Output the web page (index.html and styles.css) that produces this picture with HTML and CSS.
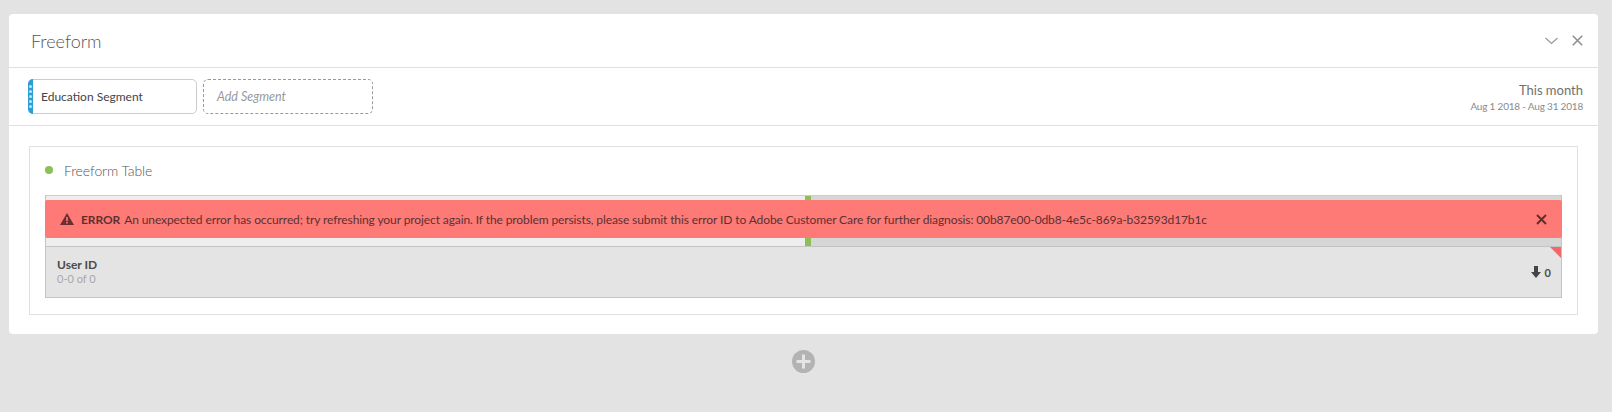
FILE: index.html
```html
<!DOCTYPE html>
<html lang="en">
<head>
    <meta charset="UTF-8">
    <title>Freeform</title>
    <link rel="stylesheet" href="styles.css">
</head>
<body>
    <div class="panel">
        <div class="panel-head">
            <h1>Freeform</h1>
            <div class="panel-actions">
                <svg width="13" height="8" viewBox="0 0 13 8"><path d="M.5 1l6 5.5 6-5.5" fill="none" stroke="#999" stroke-width="1.2"/></svg>
                <svg width="11" height="11" viewBox="0 0 11 11"><path d="M.8.8l9.4 9.4M10.2.8L.8 10.2" fill="none" stroke="#8f8f8f" stroke-width="1.6"/></svg>
            </div>
        </div>

        <div class="segments">
            <div class="segment">
                <span class="grip"><i></i><i></i><i></i><i></i><i></i></span>
                <span>Education Segment</span>
            </div>
            <div class="add-segment">Add Segment</div>
            <div class="date-range">
                <div class="date-name">This month</div>
                <div class="date-span">Aug 1 2018 - Aug 31 2018</div>
            </div>
        </div>

        <div class="panel-body">
            <div class="viz">
                <div class="viz-title"><span class="dot"></span>Freeform Table</div>
                <div class="table">
                    <div class="table-bar">
                        <div class="bar-left"></div>
                        <div class="bar-mark"></div>
                        <div class="bar-right"></div>
                    </div>
                    <div class="error-banner">
                        <svg class="warn" width="14" height="12" viewBox="0 0 14 12"><path d="M7 0l7 12H0z M6.2 4v4.2h1.6V4z M6.2 9v1.6h1.6V9z" fill="#6b2f2f" fill-rule="evenodd"/></svg>
                        <b>ERROR</b>
                        <span>An unexpected error has occurred; try refreshing your project again. If the problem persists, please submit this error ID to Adobe Customer Care for further diagnosis: 00b87e00-0db8-4e5c-869a-b32593d17b1c</span>
                        <svg class="banner-close" width="11" height="11" viewBox="0 0 11 11"><path d="M1 1l9 9M10 1l-9 9" fill="none" stroke="#5e3030" stroke-width="2"/></svg>
                    </div>
                    <div class="table-row">
                        <div>
                            <div class="row-name">User ID</div>
                            <div class="row-count">0-0 of 0</div>
                        </div>
                        <div class="row-sort">
                            <svg width="10" height="12" viewBox="0 0 10 12"><path d="M3 0h4v6h3l-5 6-5-6h3z" fill="#444"/></svg>
                            <span>0</span>
                        </div>
                        <span class="corner"></span>
                    </div>
                </div>
            </div>
        </div>
    </div>

    <div class="add-panel">
        <svg width="23" height="23" viewBox="0 0 23 23"><circle cx="11.5" cy="11.5" r="11.5" fill="#b3b3b3"/><path d="M11.5 4.5v14M4.5 11.5h14" stroke="#e4e4e4" stroke-width="3"/></svg>
    </div>
</body>
</html>
```

FILE: styles.css
```css
body {
    margin: 0;
    padding: 14px 14px 0 9px;
    background-color: #e3e3e3;
    font-family: Lato, Arial, sans-serif;
    color: #4b4b4b;
}
.panel {
    background-color: #fff;
    border-radius: 4px;
    height: 320px;
}
.panel-head {
    display: flex;
    justify-content: space-between;
    align-items: center;
    height: 53px;
    padding: 0 15px 0 22px;
    border-bottom: 1px solid #e0e0e0;
}
h1 {
    margin: 0;
    font-size: 18px;
    font-weight: 300;
    color: #555;
}
.panel-actions {
    display: flex;
    align-items: center;
    gap: 14px;
}
.segments {
    display: flex;
    align-items: center;
    gap: 6px;
    height: 57px;
    padding: 0 15px 0 19px;
    border-bottom: 1px solid #e0e0e0;
}
.segment,
.add-segment {
    display: flex;
    align-items: center;
    box-sizing: border-box;
    height: 35px;
    font-size: 12px;
    border-radius: 5px;
}
.segment {
    width: 169px;
    border: 1px solid #ccc;
    color: #444;
}
.grip {
    display: flex;
    flex-direction: column;
    justify-content: center;
    align-items: center;
    gap: 2px;
    width: 5px;
    height: 35px;
    margin: 0 8px 0 -1px;
    background-color: #2b9fd3;
    border-radius: 5px 0 0 5px;
}
.grip i {
    width: 3px;
    height: 3px;
    border-radius: 50%;
    background-color: #bfe4f4;
}
.add-segment {
    width: 170px;
    padding-left: 13px;
    border: 1px dashed #999;
    color: #999;
    font-size: 12.5px;
    font-style: italic;
}
.date-range {
    margin-left: auto;
    text-align: right;
}
.date-name {
    font-size: 13px;
    color: #707070;
}
.date-span {
    margin-top: 2px;
    font-size: 10px;
    letter-spacing: -0.2px;
    color: #8a8a8a;
}
.panel-body {
    padding: 20px 20px 0;
}
.viz {
    height: 167px;
    padding: 0 15px;
    border: 1px solid #e0e0e0;
}
.viz-title {
    display: flex;
    align-items: center;
    height: 46px;
    padding-bottom: 2px;
    font-size: 14px;
    font-weight: 300;
    letter-spacing: -0.1px;
    color: #555;
}
.dot {
    width: 8px;
    height: 8px;
    margin-right: 11px;
    border-radius: 50%;
    background-color: #8ac054;
}
.table {
    position: relative;
    border: 1px solid #c4c4c4;
    border-top: 0;
}
.table-bar {
    display: flex;
    height: 51px;
    border-top: 1px solid #ccc;
    box-sizing: border-box;
}
.bar-left {
    width: 759px;
    background-color: #eee;
}
.bar-mark {
    width: 6px;
    background-color: #8ac054;
}
.bar-right {
    flex: 1;
    background-color: #d6d6d6;
}
.error-banner {
    position: absolute;
    top: 5px;
    left: -1px;
    right: -1px;
    display: flex;
    align-items: center;
    gap: 4px;
    height: 38px;
    padding: 0 15px;
    background-color: #fd7a76;
    border-radius: 2px;
    font-size: 12px;
    letter-spacing: -0.1px;
    color: #5e3030;
}
.warn {
    margin-right: 3px;
}
.banner-close {
    margin-left: auto;
}
.table-row {
    position: relative;
    display: flex;
    justify-content: space-between;
    align-items: center;
    height: 51px;
    padding: 0 10px 2px 11px;
    background-color: #e4e4e4;
    border-top: 1px solid #c4c4c4;
    box-sizing: border-box;
}
.row-name {
    font-size: 12px;
    font-weight: 700;
    color: #4b4b4b;
}
.row-count {
    font-size: 11px;
    color: #a8a8a8;
}
.row-sort {
    display: flex;
    align-items: center;
    gap: 4px;
    padding-top: 2px;
    font-size: 11px;
    font-weight: 700;
}
.corner {
    position: absolute;
    top: 0;
    right: 0;
    border-top: 11px solid #f0696a;
    border-left: 11px solid transparent;
}
.add-panel {
    display: flex;
    justify-content: center;
    padding: 16px 0 0 0;
}
```
